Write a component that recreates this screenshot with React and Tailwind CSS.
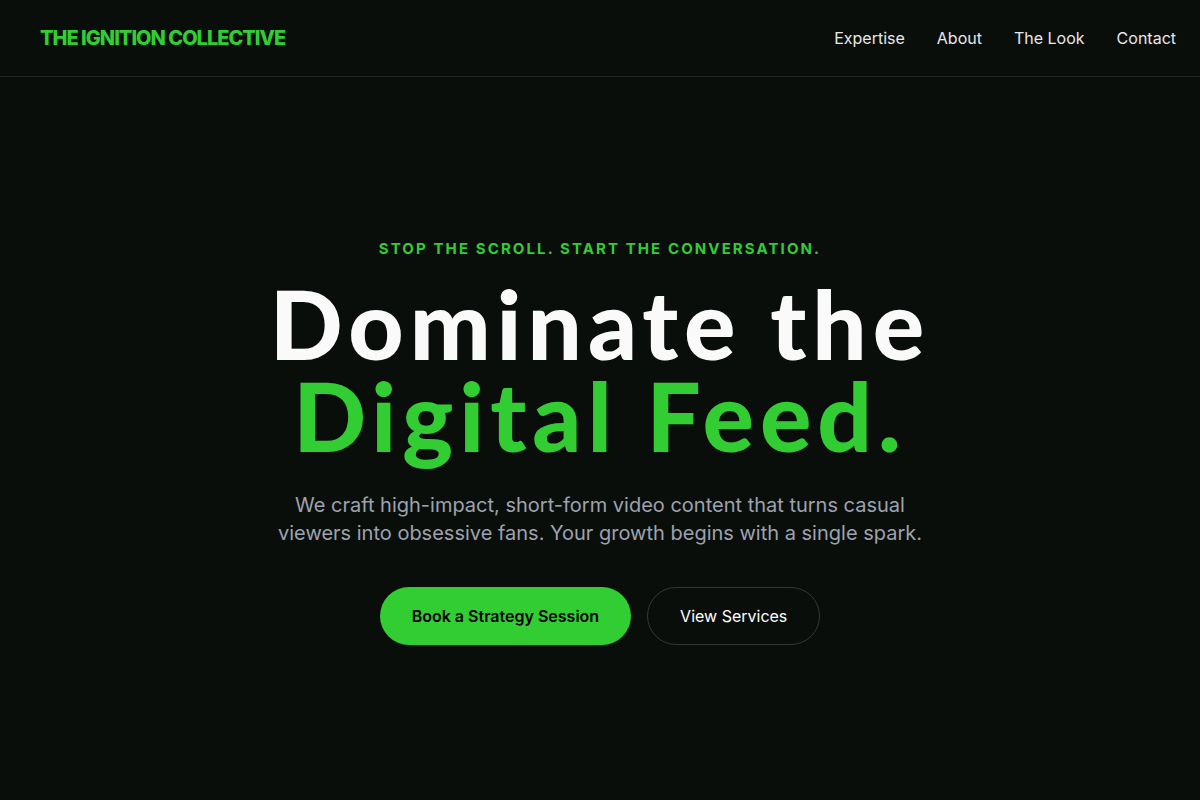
import React from 'react';

const links = ['Expertise', 'About', 'The Look', 'Contact'];

const App = () => {
    return (
        <div
            className="min-h-screen w-full bg-[#0a0e0b] flex flex-col"
            style={{ fontFamily: 'Inter, "Liberation Sans", sans-serif' }}
        >
            <header className="h-[77px] flex items-center justify-between pl-10 pr-6 border-b border-[#222623]">
                <div className="text-[20px] font-extrabold tracking-[-0.05em] text-[#32cd32] uppercase">
                    The Ignition Collective
                </div>
                <nav className="flex items-center gap-8 text-[16px] text-[#e8e8e8]">
                    {links.map((l) => (
                        <a key={l} href="#" className="hover:text-white">
                            {l}
                        </a>
                    ))}
                </nav>
            </header>

            <main className="flex-1 flex flex-col items-center justify-center text-center pt-1.5">
                <p className="text-[15px] font-bold uppercase tracking-[0.14em] text-[#32cd32]">
                    Stop the scroll. Start the conversation.
                </p>
                <h1
                    className="mt-4 text-[96px] leading-[0.96] font-black tracking-[0.062em]"
                    style={{ fontFamily: 'Lato, "Noto Sans", sans-serif' }}
                >
                    <span className="block text-[#fafafa]">Dominate the</span>
                    <span className="block text-[#32cd32]">Digital Feed.</span>
                </h1>
                <p className="mt-[30px] max-w-[660px] text-[20px] leading-[28px] text-[#9ca3af]">
                    We craft high-impact, short-form video content that turns casual
                    viewers into obsessive fans. Your growth begins with a single spark.
                </p>
                <div className="mt-10 flex items-center gap-4">
                    <button className="h-[58px] px-8 rounded-full bg-[#32cd32] text-black text-[16px] font-semibold">
                        Book a Strategy Session
                    </button>
                    <button className="h-[58px] px-8 rounded-full border border-[#333833] text-white text-[16px] font-normal">
                        View Services
                    </button>
                </div>
            </main>
        </div>
    );
};

export default App;
